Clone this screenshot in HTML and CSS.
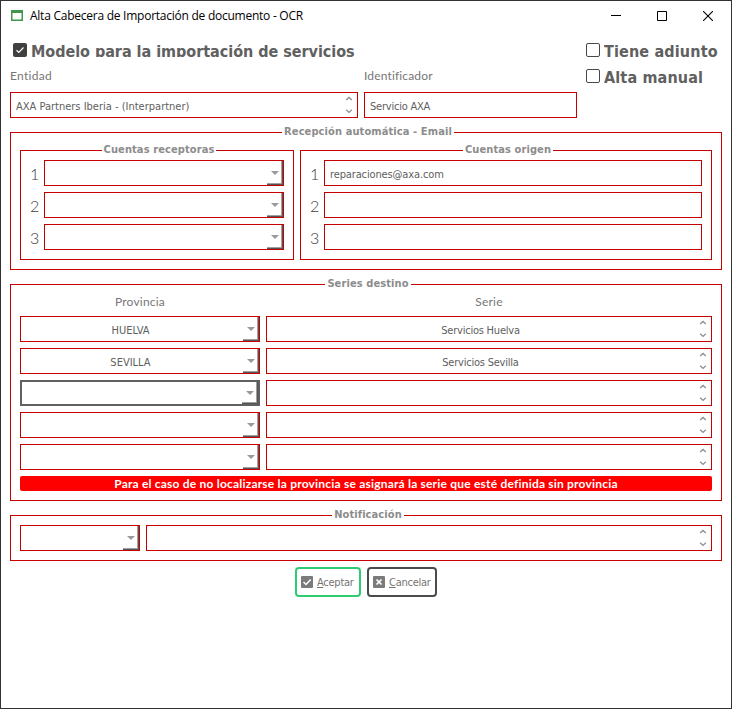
FILE: index.html
```html
<!DOCTYPE html>
<html lang="es">
<head>
<meta charset="utf-8">
<title>Alta Cabecera de Importación de documento - OCR</title>
<link rel="stylesheet" href="styles.css">
</head>
<body>
<svg class="defs" width="0" height="0">
  <symbol id="spin" viewBox="0 0 8 18"><path d="M1.2 4 4 1.400 6.800 4M1.200 13.800 4 16.400l2.800-2.600" fill="none" stroke="#8e8e8e" stroke-width="1.300"/></symbol>
</svg>
<div class="window">
  <header class="titlebar">
    <svg class="app-icon" width="12" height="11" viewBox="0 0 12 11"><path d="M.75 2h10.500v8.250H.75z" fill="#fff" stroke="#43964a" stroke-width="1.500"/><path d="M0 0h12v3H0z" fill="#43964a"/></svg>
    <span class="title">Alta Cabecera de Importación de documento - OCR</span>
    <div class="controls">
      <svg width="10" height="10"><path d="M0 4.500h10" stroke="#000"/></svg>
      <svg width="10" height="10"><path d="M.5.5h9v9h-9z" fill="none" stroke="#000"/></svg>
      <svg width="10" height="10"><path d="M0 0l10 10M10 0L0 10" stroke="#000" stroke-width="1.100"/></svg>
    </div>
  </header>

  <main class="content">
    <section class="head">
      <div class="head-main">
        <div class="check clipped"><span class="box on"><svg width="14" height="14"><path d="M3.500 7.200l2.300 2.200 4.700-4.900" fill="none" stroke="#fff" stroke-width="1.200"/></svg></span><span>Modelo para la importación de servicios</span></div>
        <div class="fields">
          <div class="col entity"><label class="caption">Entidad</label><div class="field"><span class="wide">AXA Partners Iberia - (Interpartner)</span><svg class="spin"><use href="#spin"/></svg></div></div>
          <div class="col ident"><label class="caption id">Identificador</label><div class="field">Servicio AXA</div></div>
        </div>
      </div>
      <div class="head-side">
        <div class="check clipped"><span class="box"></span><span>Tiene adjunto</span></div>
        <div class="check"><span class="box"></span><span>Alta manual</span></div>
      </div>
    </section>

    <section class="group reception">
      <h2 class="legend">Recepción automática - Email</h2>
      <div class="accounts">
        <div class="group inner receivers">
          <h3 class="legend">Cuentas receptoras</h3>
          <div class="line"><span class="num">1</span><div class="field select"><i class="drop"></i></div></div>
          <div class="line"><span class="num">2</span><div class="field select"><i class="drop"></i></div></div>
          <div class="line"><span class="num">3</span><div class="field select"><i class="drop"></i></div></div>
        </div>
        <div class="group inner senders">
          <h3 class="legend">Cuentas origen</h3>
          <div class="line"><span class="num">1</span><div class="field mail">reparaciones@axa.com</div></div>
          <div class="line"><span class="num">2</span><div class="field"></div></div>
          <div class="line"><span class="num">3</span><div class="field"></div></div>
        </div>
      </div>
    </section>

    <section class="group series">
      <h2 class="legend">Series destino</h2>
      <div class="grid">
        <span class="caption center">Provincia</span><span class="caption center">Serie</span>
        <div class="field select center"><span class="wide">HUELVA</span><i class="drop"></i></div><div class="field center">Servicios Huelva<svg class="spin"><use href="#spin"/></svg></div>
        <div class="field select center"><span class="wide">SEVILLA</span><i class="drop"></i></div><div class="field center">Servicios Sevilla<svg class="spin"><use href="#spin"/></svg></div>
        <div class="field select focused"><i class="drop"></i></div><div class="field"><svg class="spin"><use href="#spin"/></svg></div>
        <div class="field select"><i class="drop"></i></div><div class="field"><svg class="spin"><use href="#spin"/></svg></div>
        <div class="field select"><i class="drop"></i></div><div class="field"><svg class="spin"><use href="#spin"/></svg></div>
      </div>
      <p class="notice">Para el caso de no localizarse la provincia se asignará la serie que esté definida sin provincia</p>
    </section>

    <section class="group notification">
      <h2 class="legend">Notificación</h2>
      <div class="notify-row">
        <div class="field select"><i class="drop"></i></div>
        <div class="field"><svg class="spin"><use href="#spin"/></svg></div>
      </div>
    </section>

    <footer class="actions">
      <button class="btn accept"><svg width="12" height="12"><rect width="12" height="12" rx="1" fill="#7b7b7b"/><path d="M2.500 6l2.500 2.500 4.700-5" fill="none" stroke="#fff" stroke-width="1.500"/></svg><span><u>A</u>ceptar</span></button>
      <button class="btn cancel"><svg width="12" height="12"><rect width="12" height="12" rx="1" fill="#7b7b7b"/><path d="M3.500 3.500l5 5M8.500 3.500l-5 5" stroke="#fff" stroke-width="1.700"/></svg><span><u>C</u>ancelar</span></button>
    </footer>
  </main>
</div>
</body>
</html>
```
FILE: styles.css
```css
* { box-sizing: border-box; }
body {
  margin: 0;
  font: 11px/14px "DejaVu Sans Condensed", "DejaVu Sans", sans-serif;
  color: #606060;
  background: #fff;
}
.defs { position: absolute; }
.window { height: 709px; border: 1px solid #333; overflow: hidden; }

.titlebar { display: flex; align-items: center; height: 29px; padding: 0 17px 0 10px; }
.app-icon { flex: none; }
.title {
  margin-left: 7px;
  font: 12px/16px "Open Sans", sans-serif;
  letter-spacing: -0.25px;
  color: #000;
  white-space: nowrap;
}
.controls { display: flex; gap: 36px; margin-left: auto; padding-right: 1px; }
.controls svg { display: block; }

.content { padding: 7px 9px 0; }

.head { display: flex; justify-content: space-between; height: 81px; }
.head-main { width: 567px; }
.head-side { width: 136px; }
.check {
  display: flex;
  height: 26px;
  font-size: 16px;
  font-weight: bold;
  line-height: 30px;
  letter-spacing: 0.15px;
  white-space: nowrap;
}
.check > span:last-child { height: 26px; }
.check.clipped > span:last-child { height: 20px; overflow: hidden; }
.head-main .check { padding-left: 3px; letter-spacing: -0.03px; }
.box {
  flex: none;
  width: 14px;
  height: 14px;
  margin: 6px 4px 0 0;
  border: 1px solid #484848;
  border-radius: 2px;
}
.box.on { background: #404040; border: 0; }
.box svg { display: block; }
.fields { display: flex; gap: 6px; }
.entity { width: 348px; }
.ident { width: 213px; }
.caption {
  display: block;
  height: 29px;
  font: 12px/26px Lato, sans-serif;
  letter-spacing: 0.3px;
  color: #777;
}
.caption.id { letter-spacing: 0.15px; }
.caption.center { text-align: center; letter-spacing: 0.2px; }

.field {
  position: relative;
  display: flex;
  align-items: center;
  height: 26px;
  padding: 3px 5px 0;
  border: 1px solid #c80000;
  letter-spacing: -0.22px;
  white-space: nowrap;
}
.field.mail { letter-spacing: -0.13px; }
.wide { letter-spacing: 0; }
.field.center { justify-content: center; padding-right: 22px; }
.field.select.center { padding-right: 24px; }
.spin { position: absolute; right: 4px; top: 3px; width: 8px; height: 18px; }
.drop {
  position: absolute;
  right: 0;
  top: 0;
  width: 16px;
  height: 24px;
  border-right: 1px solid #555;
  border-bottom: 1px solid #555;
  box-shadow: inset -1px -1px #a0a0a0;
}
.drop::after {
  content: "";
  position: absolute;
  left: 4px;
  top: 10px;
  border: 4px solid transparent;
  border-top-color: #999;
  border-bottom: 0;
}
.focused { border: 2px solid #606060; }
.focused .drop { height: 22px; }
.focused .drop::after { top: 9px; }

.group { display: flex; flex-direction: column; border: 1px solid #c80000; padding: 0 9px 9px; }
.legend {
  position: relative;
  left: 2px;
  align-self: center;
  height: 18px;
  margin: -10px 0 0;
  padding: 0 2px;
  background: #fff;
  font-size: 11px;
  line-height: 18px;
  font-weight: bold;
  letter-spacing: 0.1px;
  color: #8c8c8c;
  white-space: nowrap;
}
.reception { height: 138px; margin-top: 14px; }
.accounts { display: grid; grid-template-columns: 274px 1fr; gap: 6px; padding-top: 9px; }
.inner { height: 110px; }
.inner .legend { margin-bottom: 1px; }
.line { display: grid; grid-template-columns: 14px 1fr; height: 26px; margin-bottom: 6px; }
.num { height: 26px; font: 300 16px/27px Lato, sans-serif; color: #404040; }

.series { height: 217px; margin-top: 14px; }
.grid { display: grid; grid-template-columns: 240px 1fr; gap: 6px; padding-top: 1px; }
.grid .caption { height: 16px; line-height: 16px; }
.notice {
  height: 15px;
  margin: 6px 0 0;
  border-radius: 2px;
  background: #f00;
  color: #fff;
  font: bold 12px/15px Lato, sans-serif;
  letter-spacing: 0.2px;
  text-align: center;
  white-space: nowrap;
}
.notification { height: 46px; margin-top: 14px; }
.notification .legend { margin-bottom: 1px; }
.notify-row { display: grid; grid-template-columns: 120px 1fr; gap: 6px; }

.actions { display: flex; justify-content: center; gap: 6px; margin-top: 6px; }
.btn {
  display: flex;
  align-items: center;
  gap: 4px;
  height: 30px;
  padding: 0 0 0 4px;
  border: 2px solid #4b4b4b;
  border-radius: 4px;
  background: #fff;
  font: 11px/14px "DejaVu Sans Condensed", "DejaVu Sans", sans-serif;
  letter-spacing: -0.25px;
  color: #757575;
}
.btn span { position: relative; top: 1px; }
.accept { width: 66px; border-color: #2ecc71; }
.cancel { width: 70px; }
```
